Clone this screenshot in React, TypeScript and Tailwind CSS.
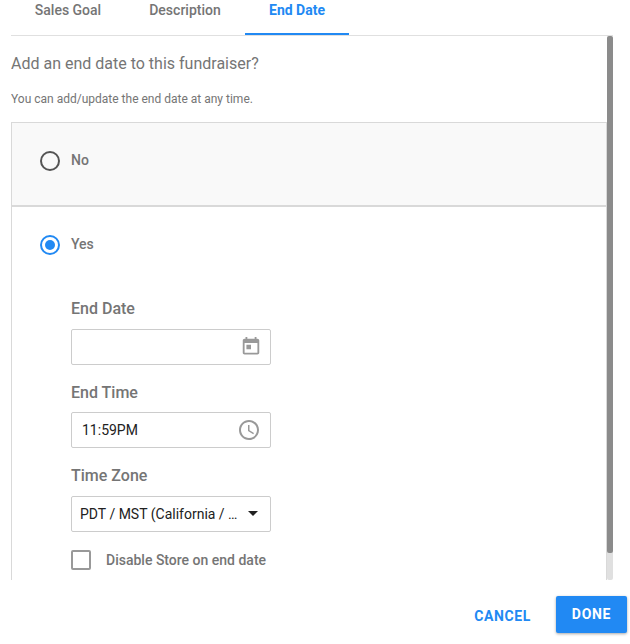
import { useState } from 'react';

const tabs = [
  { label: 'Sales Goal', width: 'w-[114px]' },
  { label: 'Description', width: 'w-[120px]' },
  { label: 'End Date', width: 'w-[104px]' },
];

type RadioProps = {
  label: string;
  checked: boolean;
  onSelect: () => void;
};

function Radio({ label, checked, onSelect }: RadioProps) {
  return (
    <button type="button" onClick={onSelect} className="flex items-center">
      <span
        className={`flex h-5 w-5 items-center justify-center rounded-full border-2 ${
          checked ? 'border-[#2189f3]' : 'border-[#545454]'
        }`}
      >
        {checked && <span className="h-2.5 w-2.5 rounded-full bg-[#2189f3]" />}
      </span>
      <span className="ml-[11px] -mt-0.5 text-sm leading-5 font-medium text-[#757575]">{label}</span>
    </button>
  );
}

function CalendarIcon() {
  return (
    <svg viewBox="0 0 24 24" preserveAspectRatio="none" className="mr-2 mb-px h-[21px] w-[22px] fill-[#999999]">
      <path d="M19 3h-1V1h-2v2H8V1H6v2H5c-1.11 0-1.99.9-1.99 2L3 19c0 1.1.89 2 2 2h14c1.1 0 2-.9 2-2V5c0-1.1-.9-2-2-2zm0 16H5V8h14v11zM7 10h5v5H7z" />
    </svg>
  );
}

function ClockIcon() {
  return (
    <svg viewBox="0 0 24 24" className="mr-[9px] h-6 w-6 fill-[#999999]">
      <path d="M11.99 2C6.47 2 2 6.48 2 12s4.47 10 9.99 10C17.52 22 22 17.52 22 12S17.52 2 11.99 2zM12 20c-4.42 0-8-3.58-8-8s3.58-8 8-8 8 3.58 8 8-3.58 8-8 8zm.5-13H11v6l5.25 3.15.75-1.23-4.5-2.67z" />
    </svg>
  );
}

export default function App() {
  const [activeTab, setActiveTab] = useState('End Date');
  const [hasEndDate, setHasEndDate] = useState(true);
  const [disableStore, setDisableStore] = useState(false);

  return (
    <div className="flex h-[644px] w-[630px] flex-col overflow-hidden bg-white font-['Roboto',sans-serif]">
      <div className="ml-[11px] flex h-9 w-[602px] border-b border-[#e0e0e0]">
        {tabs.map((tab) => (
          <button
            key={tab.label}
            onClick={() => setActiveTab(tab.label)}
            className={`${tab.width} h-[35px] border-b-2 pb-[13px] text-center text-sm leading-5 whitespace-nowrap ${
              activeTab === tab.label
                ? 'border-[#2189f3] font-bold text-[#2189f3]'
                : 'border-transparent font-medium text-[#757575]'
            }`}
          >
            {tab.label}
          </button>
        ))}
      </div>

      <div className="ml-[11px] flex h-[544px] w-[602px]">
        <div className="w-[596px] overflow-hidden">
          <h2 className="pt-4 text-base leading-6 text-[#757575]">Add an end date to this fundraiser?</h2>
          <p className="pt-[13px] text-xs leading-5 text-[#757575]">You can add/update the end date at any time.</p>

          <div className="mt-[13px] h-[500px] border border-[#d9d9d9]">
            <div className="h-[84px] border-b-2 border-[#d9d9d9] bg-[#f9f9f9] pt-7 pl-7">
              <Radio label="No" checked={!hasEndDate} onSelect={() => setHasEndDate(false)} />
            </div>

            <div className="pt-7 pl-7">
              <Radio label="Yes" checked={hasEndDate} onSelect={() => setHasEndDate(true)} />

              <div className="ml-[31px] w-[200px] pt-[42px]">
                <label className="block h-8 text-base leading-6 font-medium text-[#757575]">End Date</label>
                <div className="flex h-9 items-center justify-end rounded-xs border border-[#cccccc]">
                  <CalendarIcon />
                </div>

                <label className="mt-4 block h-[31px] text-base leading-6 font-medium text-[#757575]">End Time</label>
                <div className="flex h-9 items-center justify-between rounded-xs border border-[#cccccc] pl-2.5">
                  <span className="text-sm text-[#212121]">11:59PM</span>
                  <ClockIcon />
                </div>

                <label className="mt-4 block h-8 text-base leading-6 font-medium text-[#757575]">Time Zone</label>
                <div className="flex h-9 items-center justify-between rounded-xs border border-[#cccccc] pr-3 pl-2">
                  <span className="text-sm whitespace-nowrap text-[#212121]">PDT / MST (California / …</span>
                  <svg viewBox="0 0 10 5" className="mb-px h-[5px] w-2.5 fill-[#212121]">
                    <path d="M0 0h10L5 5z" />
                  </svg>
                </div>

                <button
                  type="button"
                  onClick={() => setDisableStore(!disableStore)}
                  className="mt-[18px] flex items-center"
                >
                  <span
                    className={`h-5 w-5 rounded-xs border-2 ${
                      disableStore ? 'border-[#2189f3] bg-[#2189f3]' : 'border-[#999999]'
                    }`}
                  />
                  <span className="ml-[15px] text-sm leading-5 font-medium whitespace-nowrap text-[#757575]">
                    Disable Store on end date
                  </span>
                </button>
              </div>
            </div>
          </div>
        </div>

        <div className="w-1.5 rounded-xs bg-[#e0e0e0]">
          <div className="h-[517px] rounded-xs bg-[#8b8b8b]" />
        </div>
      </div>

      <div className="flex justify-end pt-4 pr-[3px]">
        <button className="mr-[25px] pt-0.5 text-sm font-bold tracking-[0.6px] text-[#2189f3]">CANCEL</button>
        <button className="h-[37px] w-[71px] rounded-xs bg-[#2189f3] pb-0.5 text-sm font-bold tracking-[0.7px] text-white shadow-[0_1px_3px_rgba(0,0,0,0.35)]">
          DONE
        </button>
      </div>
    </div>
  );
}
